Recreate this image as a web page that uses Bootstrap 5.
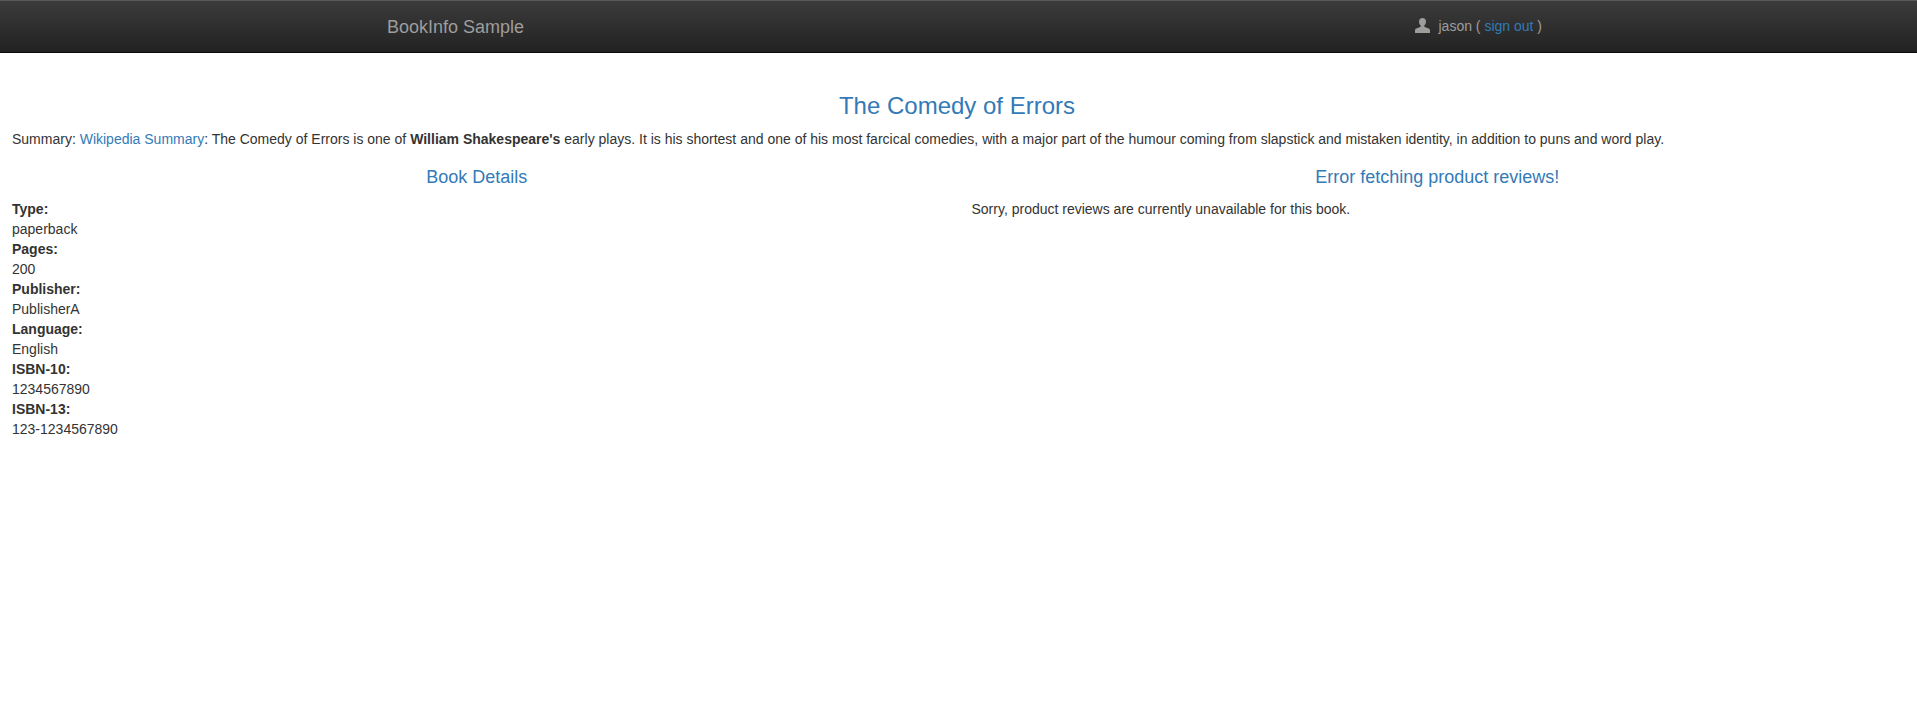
<!DOCTYPE html>
<html lang="en"><head><meta charset="utf-8"><title>Simple Bookstore App</title>
<link href="https://cdn.jsdelivr.net/npm/bootstrap@5.3.0/dist/css/bootstrap.min.css" rel="stylesheet">
<style>
body{font-family:"Liberation Sans",Arial,sans-serif;font-size:14px;line-height:20px;color:#333;background:#fff}
a{color:#337ab7;text-decoration:none}
.topbar{height:53px;padding-top:2px;background:linear-gradient(to bottom,#3c3c3c 0,#222 100%);border-bottom:1px solid #080808;box-shadow:inset 0 1px 0 rgba(255,255,255,.15)}
.bar-half{width:50%;padding:0 15px}
.brand-wrap{padding-left:387px;padding-right:0}
.brand-name{font-size:18px;line-height:20px;color:#9d9d9d}
.user-wrap{padding-left:456px}
.user-line{color:#9d9d9d;line-height:20px}
.user-icon{margin-right:9px}
.page-title{font-size:24px;line-height:26px;font-weight:500;color:#337ab7;margin:40px 3px 10px 0;text-align:center}
.summary-line{padding:0 12px;margin:0 0 18px}
.col-head{font-size:18px;line-height:20px;font-weight:500;color:#337ab7;text-align:center;margin:0 0 12px}
.pane-left{width:50%;padding:0 17px 0 12px}
.pane-right{width:50%;padding:0 14px 0 13px}
.detail-list{margin:0}
.detail-list dt{font-weight:700;line-height:20px}
.detail-list dd{margin:0;line-height:20px}
.note-line{margin:0}
</style></head>
<body>
<nav class="topbar d-flex align-items-center">
<div class="bar-half brand-wrap"><span class="brand-name">BookInfo Sample</span></div>
<div class="bar-half user-wrap"><span class="user-line d-inline-flex align-items-center"><svg class="user-icon" width="15" height="15" viewBox="0 0 15 15" fill="#9d9d9d"><path d="M7.500 0C5.300 0 4 1.600 4 3.700c0 1.500.7 3 1.700 3.800v1.300L1.300 10.600C.5 10.900 0 11.500 0 12.300V15h15v-2.700c0-.8-.5-1.400-1.300-1.700L9.300 8.800V7.500c1-.8 1.700-2.300 1.700-3.800C11 1.600 9.700 0 7.500 0z"/></svg><span>jason (&nbsp;<a href="#">sign out</a>&nbsp;)</span></span></div>
</nav>
<h3 class="page-title">The Comedy of Errors</h3>
<p class="summary-line">Summary: <a href="#">Wikipedia Summary</a>: The Comedy of Errors is one of <b>William Shakespeare's</b> early plays. It is his shortest and one of his most farcical comedies, with a major part of the humour coming from slapstick and mistaken identity, in addition to puns and word play.</p>
<div class="d-flex">
<div class="pane-left">
<h4 class="col-head">Book Details</h4>
<dl class="detail-list"><dt>Type:</dt><dd>paperback</dd><dt>Pages:</dt><dd>200</dd><dt>Publisher:</dt><dd>PublisherA</dd><dt>Language:</dt><dd>English</dd><dt>ISBN-10:</dt><dd>1234567890</dd><dt>ISBN-13:</dt><dd>123-1234567890</dd></dl>
</div>
<div class="pane-right">
<h4 class="col-head">Error fetching product reviews!</h4>
<p class="note-line">Sorry, product reviews are currently unavailable for this book.</p>
</div>
</div>
<script src="https://cdn.jsdelivr.net/npm/bootstrap@5.3.0/dist/js/bootstrap.bundle.min.js"></script>
</body></html>
